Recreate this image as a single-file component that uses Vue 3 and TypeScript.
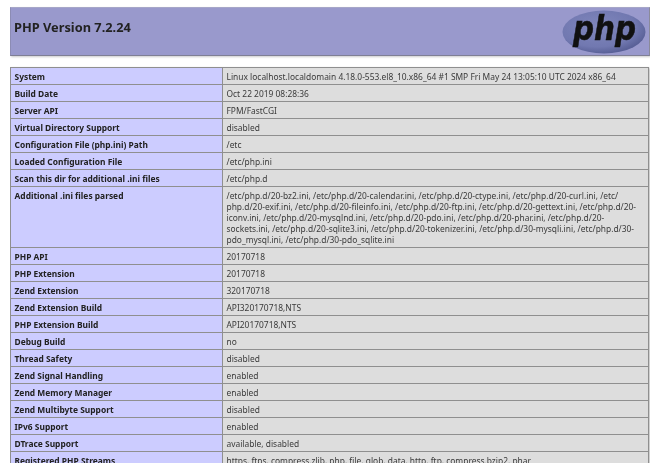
<script setup lang="ts">
interface Row { k: string; v: string }
const rows: Row[] = [
  { k: 'System', v: 'Linux localhost.localdomain 4.18.0-553.el8_10.x86_64 #1 SMP Fri May 24 13:05:10 UTC 2024 x86_64' },
  { k: 'Build Date', v: 'Oct 22 2019 08:28:36' },
  { k: 'Server API', v: 'FPM/FastCGI' },
  { k: 'Virtual Directory Support', v: 'disabled' },
  { k: 'Configuration File (php.ini) Path', v: '/etc' },
  { k: 'Loaded Configuration File', v: '/etc/php.ini' },
  { k: 'Scan this dir for additional .ini files', v: '/etc/php.d' },
  { k: 'Additional .ini files parsed', v: '/etc/php.d/20-bz2.ini, /etc/php.d/20-calendar.ini, /etc/php.d/20-ctype.ini, /etc/php.d/20-curl.ini, /etc/\nphp.d/20-exif.ini, /etc/php.d/20-fileinfo.ini, /etc/php.d/20-ftp.ini, /etc/php.d/20-gettext.ini, /etc/php.d/20-\niconv.ini, /etc/php.d/20-mysqlnd.ini, /etc/php.d/20-pdo.ini, /etc/php.d/20-phar.ini, /etc/php.d/20-\nsockets.ini, /etc/php.d/20-sqlite3.ini, /etc/php.d/20-tokenizer.ini, /etc/php.d/30-mysqli.ini, /etc/php.d/30-\npdo_mysql.ini, /etc/php.d/30-pdo_sqlite.ini' },
  { k: 'PHP API', v: '20170718' },
  { k: 'PHP Extension', v: '20170718' },
  { k: 'Zend Extension', v: '320170718' },
  { k: 'Zend Extension Build', v: 'API320170718,NTS' },
  { k: 'PHP Extension Build', v: 'API20170718,NTS' },
  { k: 'Debug Build', v: 'no' },
  { k: 'Thread Safety', v: 'disabled' },
  { k: 'Zend Signal Handling', v: 'enabled' },
  { k: 'Zend Memory Manager', v: 'enabled' },
  { k: 'Zend Multibyte Support', v: 'disabled' },
  { k: 'IPv6 Support', v: 'enabled' },
  { k: 'DTrace Support', v: 'available, disabled' },
  { k: 'Registered PHP Streams', v: 'https, ftps, compress.zlib, php, file, glob, data, http, ftp, compress.bzip2, phar' },
]
</script>

<template>
  <div class="page">
    <div class="head">
      <h1 class="title">PHP Version 7.2.24</h1>
      <svg class="logo" width="84" height="44" viewBox="0 0 84 44" role="img" aria-label="php logo">
        <defs>
          <radialGradient id="oval" cx="42%" cy="38%" r="62%">
            <stop offset="0%" stop-color="#8087bd" />
            <stop offset="75%" stop-color="#7178b0" />
            <stop offset="100%" stop-color="#5a6198" />
          </radialGradient>
        </defs>
        <ellipse cx="42" cy="22" rx="41.5" ry="21.5" fill="url(#oval)" />
        <text x="11" y="30" textLength="63" lengthAdjust="spacingAndGlyphs" class="logo-text">php</text>
      </svg>
    </div>
    <table class="info">
      <tbody>
        <tr v-for="r in rows" :key="r.k">
          <td class="e">{{ r.k }}</td>
          <td class="v">{{ r.v }}</td>
        </tr>
      </tbody>
    </table>
  </div>
</template>

<style>
html, body { margin: 0; background: #fff; overflow: hidden; }
</style>

<style scoped>
.page {
  width: 640px;
  height: 456px;
  margin: 0 10px;
  padding-top: 7px;
  overflow: hidden;
  font-family: "Noto Sans", "Open Sans", sans-serif;
  color: #222;
  filter: blur(0.3px);
}
.head {
  height: 49px;
  box-sizing: border-box;
  background: #9999cc;
  border-right: 1px solid #8a8a9a;
  border-bottom: 1px solid #7f7f95;
  border-top: 1px solid #a6a6c8;
  border-left: 1px solid #8c8cb4;
  box-shadow: 1px 1px 2px #ccc;
  display: flex;
  justify-content: space-between;
  padding: 1px 3px 0 3px;
}
.title {
  margin: 10px 0 0;
  font-size: 12.8px;
  line-height: 16px;
  font-weight: 700;
  color: #222;
}
.logo { flex: none; margin-top: 1px; }
.logo-text {
  font-family: "DejaVu Sans", sans-serif;
  font-weight: 700;
  font-style: italic;
  font-size: 33px;
  fill: #111;
  stroke: #111;
  stroke-width: 0.5px;
}
.info {
  width: 639px;
  margin-top: 11px;
  border-collapse: collapse;
  table-layout: fixed;
  box-shadow: 1px 1px 2px #bbb;
  font-size: 8.42px;
  line-height: 11px;
}
.e, .v {
  border: 1px solid #8f8f8f;
  padding: 3px 3.5px 2px;
  vertical-align: top;
}
.e {
  width: 204px;
  background: #ccccff;
  font-weight: 700;
  color: #222;
}
.v {
  background: #dddddd;
  color: #3a3a3a;
  white-space: pre-line;
}
</style>
